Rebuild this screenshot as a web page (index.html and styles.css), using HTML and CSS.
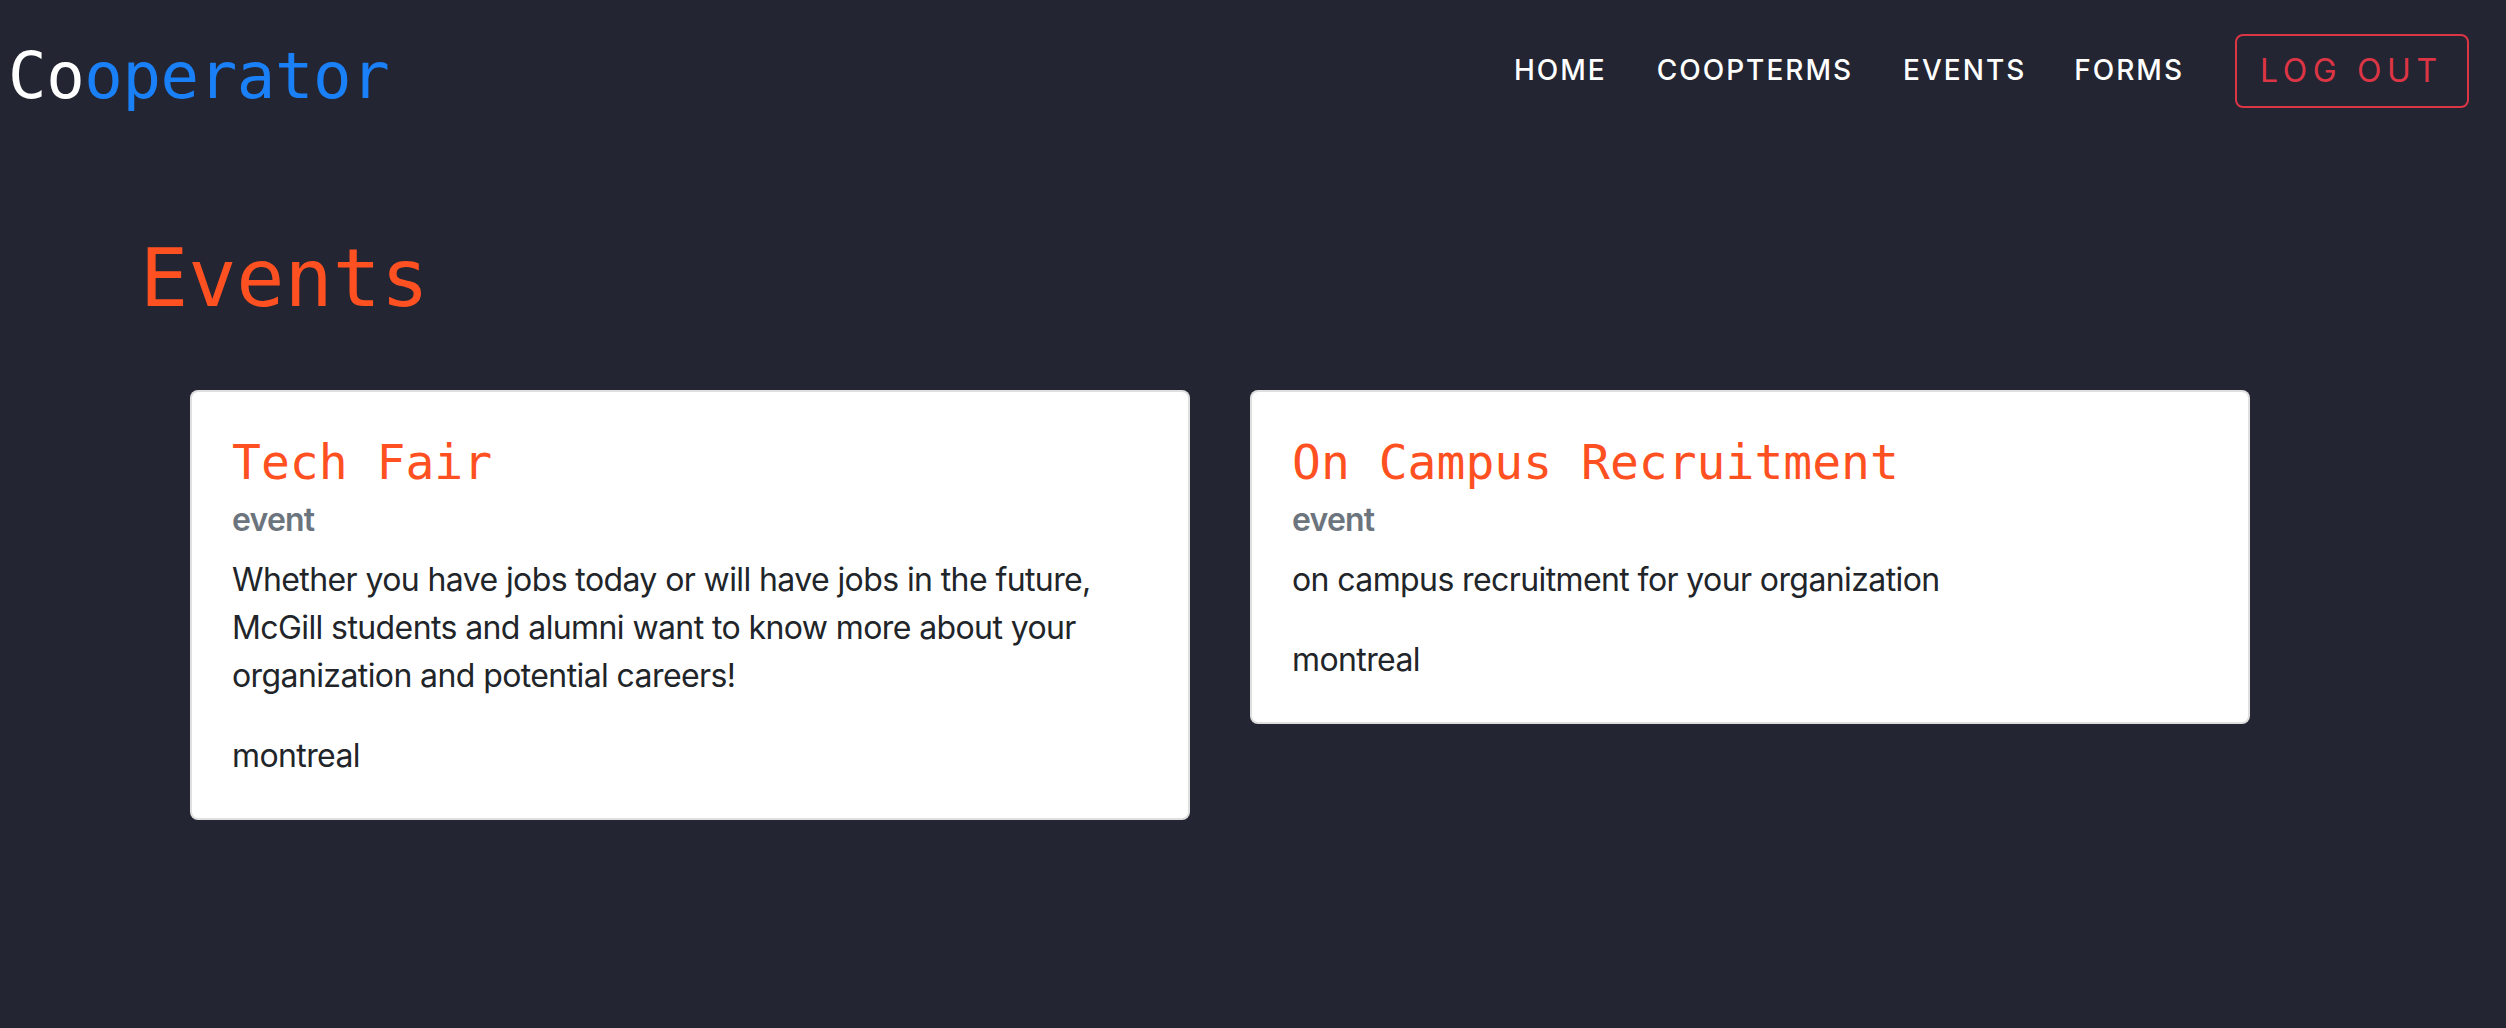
FILE: index.html
```html
<!DOCTYPE html>
<html lang="en">
<head>
<meta charset="utf-8">
<title>Cooperator - Events</title>
<link rel="stylesheet" href="styles.css">
</head>
<body>
<nav class="navbar">
  <a class="brand" href="#"><span class="brand-co">Co</span><span class="brand-rest">operator</span></a>
  <div class="nav-links">
    <a class="nav-link" href="#">HOME</a>
    <a class="nav-link" href="#">COOPTERMS</a>
    <a class="nav-link" href="#">EVENTS</a>
    <a class="nav-link" href="#">FORMS</a>
    <button class="logout" type="button">LOG OUT</button>
  </div>
</nav>
<main class="page">
  <h1 class="page-title">Events</h1>
  <div class="cards">
    <div class="card">
      <h5 class="card-title">Tech Fair</h5>
      <h6 class="card-subtitle">event</h6>
      <p class="card-text">Whether you have jobs today or will have jobs in the future, McGill students and alumni want to know more about your organization and potential careers!</p>
      <p class="card-text">montreal</p>
    </div>
    <div class="card">
      <h5 class="card-title">On Campus Recruitment</h5>
      <h6 class="card-subtitle">event</h6>
      <p class="card-text">on campus recruitment for your organization</p>
      <p class="card-text">montreal</p>
    </div>
  </div>
</main>
</body>
</html>
```
FILE: styles.css
```css
html, body {
  margin: 0;
  padding: 0;
}
body {
  background: #232532;
  font-family: Inter, "Noto Sans", "Liberation Sans", sans-serif;
  color: #212529;
  min-height: 1028px;
}
a { text-decoration: none; }

.navbar {
  height: 140px;
  display: flex;
  align-items: center;
  justify-content: space-between;
  padding: 0 37px 0 8px;
}
.brand {
  font-family: "DejaVu Sans Mono", "Liberation Mono", monospace;
  font-size: 64px;
  line-height: 64px;
  padding-top: 12px;
  letter-spacing: -0.4px;
}
.brand-co { color: #ffffff; }
.brand-rest { color: #1a80f8; }

.nav-links {
  display: flex;
  align-items: center;
}
.nav-link {
  color: #ffffff;
  font-size: 28px;
  font-weight: 500;
  letter-spacing: 2px;
  line-height: 40px;
  margin-right: 50px;
}
.nav-link:nth-child(3) { margin-right: 48px; }
.nav-link:nth-child(4) { margin-right: 51px; }
.logout {
  background: transparent;
  border: 2px solid #dc3545;
  border-radius: 8px;
  color: #dc3545;
  font-family: Inter, "Noto Sans", "Liberation Sans", sans-serif;
  font-size: 32px;
  letter-spacing: 5.6px;
  height: 74px;
  width: 234px;
  padding: 0 0 0 23px;
  text-align: left;
  line-height: 70px;
  margin-top: 2px;
}

.page {
  padding: 0 0 0 140px;
}
.page-title {
  margin: 91px 0 63px 0;
  font-family: "DejaVu Sans Mono", "Liberation Mono", monospace;
  font-weight: 400;
  font-size: 80px;
  line-height: 96px;
  color: #ff5022;
}
.cards {
  display: flex;
  align-items: flex-start;
  gap: 60px;
  padding-left: 50px;
}
.card {
  width: 1000px;
  box-sizing: border-box;
  background: #ffffff;
  border: 2px solid rgba(0, 0, 0, 0.125);
  border-radius: 8px;
  padding: 42px 40px 38px 40px;
}
.card-title {
  margin: 0 0 21px 0;
  font-family: "DejaVu Sans Mono", "Liberation Mono", monospace;
  font-weight: 400;
  font-size: 48px;
  line-height: 1.2;
  color: #ff5022;
}
.card-subtitle {
  margin: -12px 0 17px 0;
  font-size: 32px;
  font-weight: 600;
  line-height: 1.2;
  letter-spacing: -0.8px;
  color: #6c757d;
}
.card-text {
  margin: 0 0 32px 0;
  font-size: 32px;
  line-height: 48px;
  letter-spacing: -0.6px;
  color: #212529;
}
.card-text:last-child { margin-bottom: 0; }
```
